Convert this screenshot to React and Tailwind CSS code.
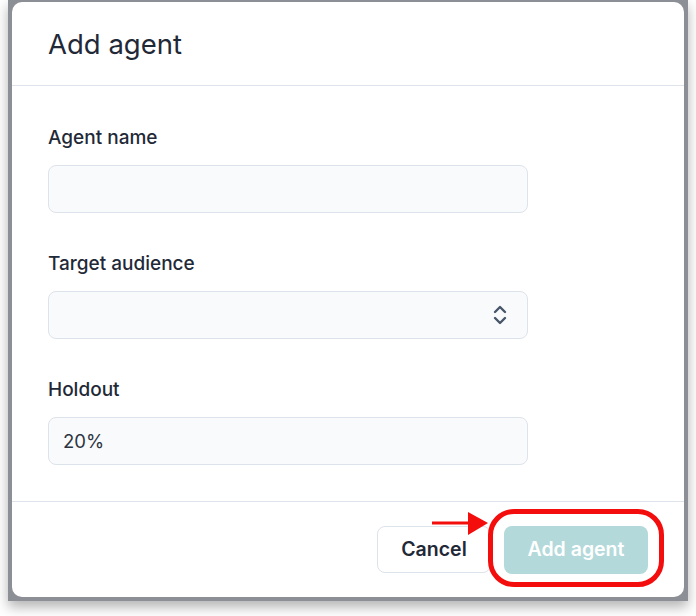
import { useState } from 'react'

function Field({ label, children }) {
  return (
    <div className="flex flex-col gap-[15px]">
      <label className="text-[19px] leading-[24px] font-medium text-[#1f2937]">{label}</label>
      {children}
    </div>
  )
}

const inputCls =
  'h-[48px] w-[480px] rounded-[8px] border border-[#dde3ea] bg-[#f9fafc] px-[14px] text-[18.5px] text-[#2d3542] outline-none'

export default function App() {
  const [name, setName] = useState('')
  const [holdout, setHoldout] = useState('20%')

  return (
    <div className="relative h-[616px] w-[696px] bg-white font-['Inter',sans-serif]">
      {/* Backdrop frame */}
      <div className="ml-[8px] h-[601px] w-[680px] bg-[#8c8f95] pt-[2px] pl-[4px] shadow-[0_6px_12px_rgba(0,0,0,0.3)]">
        {/* Dialog */}
        <div className="flex h-[595px] w-[672px] flex-col rounded-[10px] bg-white">
          <div className="border-b border-[#dfe4ec] px-[36px] pt-[26px] pb-[25px]">
            <h2 className="text-[27.5px] leading-[32px] text-[#1f2937]">Add agent</h2>
          </div>

          <div className="flex flex-col gap-[39px] border-b border-[#dfe4ec] px-[36px] pt-[40px] pb-[36px]">
            <Field label="Agent name">
              <input value={name} onChange={(e) => setName(e.target.value)} className={inputCls} />
            </Field>
            <Field label="Target audience">
              <div className={inputCls + ' relative flex items-center justify-end pr-[20px]'}>
                <svg width="14" height="22" viewBox="0 0 14 22" fill="none" stroke="#475569" strokeWidth="2.4" strokeLinecap="round" strokeLinejoin="round">
                  <path d="M2 8 L7 3 L12 8" />
                  <path d="M2 14 L7 19 L12 14" />
                </svg>
              </div>
            </Field>
            <Field label="Holdout">
              <input value={holdout} onChange={(e) => setHoldout(e.target.value)} className={inputCls} />
            </Field>
          </div>

          <div className="flex flex-1 items-center justify-end gap-[13px] px-[36px]">
            <button className="h-[47px] w-[114px] rounded-[8px] border border-[#dde3ea] bg-white text-[19.5px] font-semibold text-[#1f2937]">
              Cancel
            </button>
            <button className="h-[48px] w-[144px] rounded-[8px] bg-[#b3d9da] text-[19.5px] font-semibold text-white">
              Add agent
            </button>
          </div>
        </div>
      </div>

      {/* Red annotation */}
      <div className="pointer-events-none absolute left-[488px] top-[509px] h-[78px] w-[176px] rounded-[26px] border-[5px] border-[#f40d0d]" />
      <svg className="pointer-events-none absolute left-[430px] top-[510px]" width="60" height="28" viewBox="0 0 60 28">
        <line x1="2" y1="13" x2="42" y2="13" stroke="#f40d0d" strokeWidth="3" />
        <polygon points="38,2 58,13 38,25" fill="#f40d0d" />
      </svg>
    </div>
  )
}
